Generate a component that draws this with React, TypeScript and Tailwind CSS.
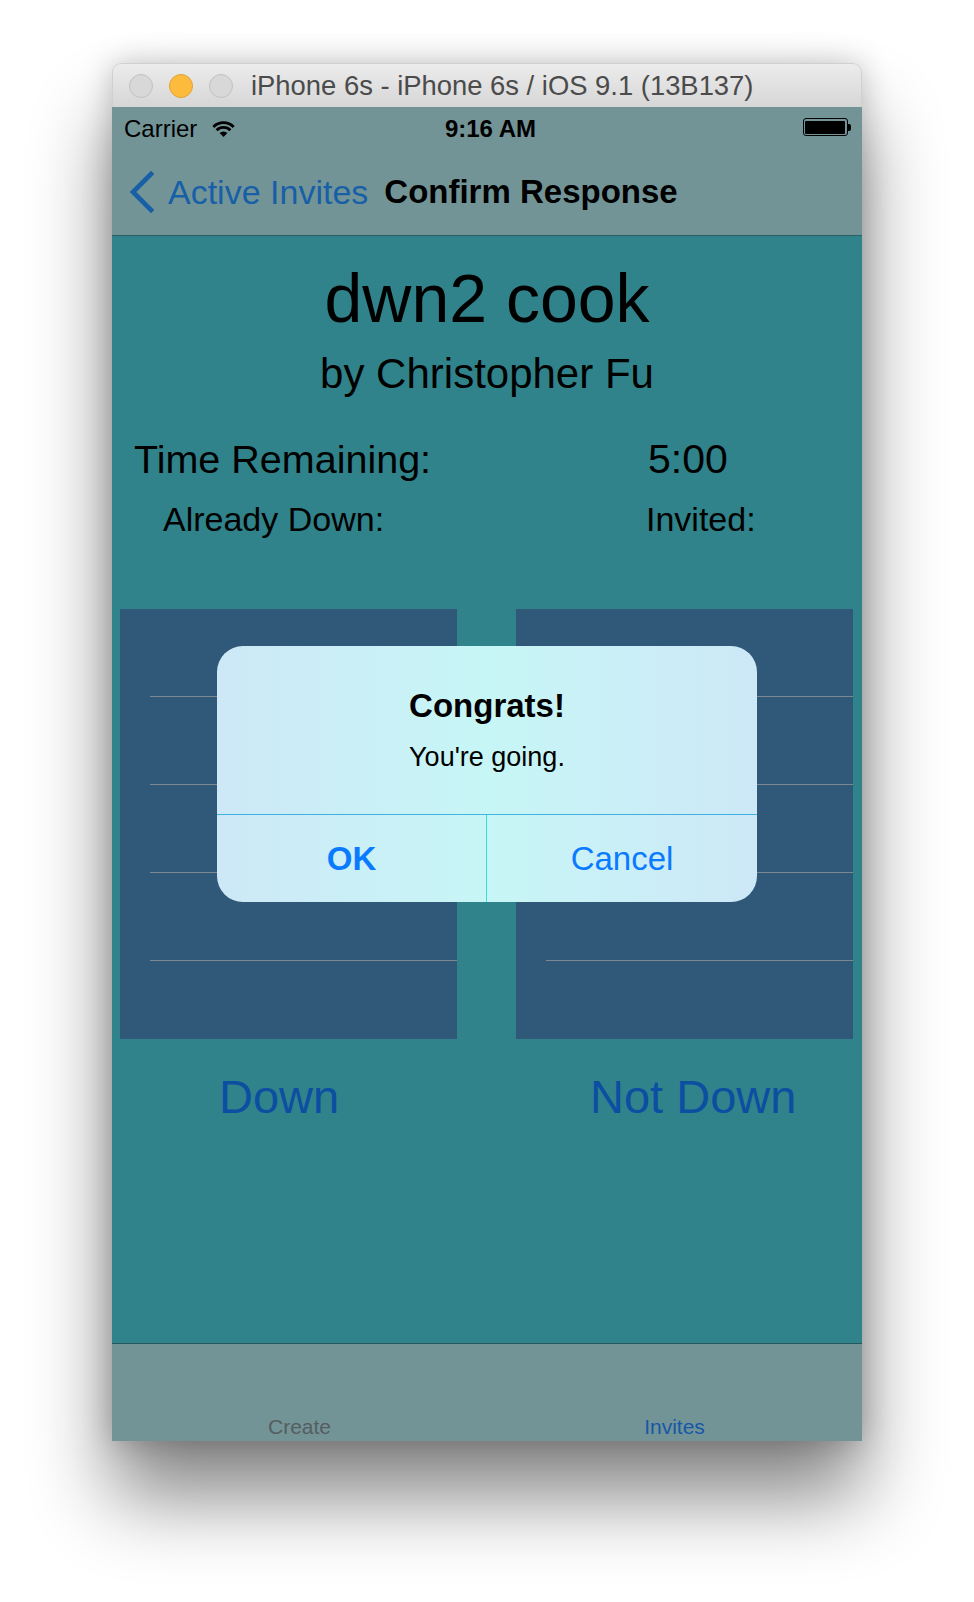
import React from "react";

function Wifi() {
    return (
        <svg width="25" height="17" viewBox="0 0 25 17" className="block">
            <path d="M2.3 6.9 A14.4 14.4 0 0 1 22.7 6.9" fill="none" stroke="#000" strokeWidth="2.8" />
            <path d="M5.6 10.2 A9.8 9.8 0 0 1 19.4 10.2" fill="none" stroke="#000" strokeWidth="2.8" />
            <path d="M12.5 17 L8.6 13.1 A5.5 5.5 0 0 1 16.4 13.1 Z" fill="#000" />
        </svg>
    );
}

function Battery() {
    return (
        <div className="flex items-center">
            <div className="w-[45px] h-[18px] border-[1.5px] border-black rounded-[3px] p-[1.5px]">
                <div className="w-full h-full bg-black rounded-[1px]" />
            </div>
            <div className="w-[3px] h-[7px] bg-black rounded-r-[2px]" />
        </div>
    );
}

function TableBox({ inset }: { inset: string }) {
    return (
        <div className="w-[337px] h-[430px] bg-[#305878]">
            {[0, 1, 2, 3].map((i) => (
                <div key={i} className={`h-[88px] border-b border-[#7d8791] ${inset}`} />
            ))}
        </div>
    );
}

export default function App() {
    return (
        <div className="min-h-[1602px] bg-white pt-[63px] pl-[112px] font-['Liberation_Sans',Arial,sans-serif]">
            <div className="w-[750px] rounded-t-[9px] shadow-[0_56px_80px_rgba(0,0,0,0.48),0_0_30px_rgba(0,0,0,0.22)]">
                {/* simulator title bar */}
                <div className="h-[44px] rounded-t-[9px] bg-gradient-to-b from-[#ececec] to-[#d6d6d6] border-t border-x border-[#d0d0d0] flex items-center pl-[16px]">
                    <div className="flex gap-[16px]">
                        <div className="w-[24px] h-[24px] rounded-full bg-[#d8d8d8] border border-[#c2c2c2]" />
                        <div className="w-[24px] h-[24px] rounded-full bg-[#fdbb3e] border border-[#e0a232]" />
                        <div className="w-[24px] h-[24px] rounded-full bg-[#d8d8d8] border border-[#c2c2c2]" />
                    </div>
                    <span className="ml-[18px] text-[27.4px] text-[#4b4b4b]">iPhone 6s - iPhone 6s / iOS 9.1 (13B137)</span>
                </div>

                {/* screen */}
                <div className="relative h-[1334px] flex flex-col">
                    <div className="bg-[#739497]">
                        <div className="h-[40px] grid grid-cols-3 items-center px-[12px] pr-[11px]">
                            <div className="flex items-center gap-[14px] pt-[3px]">
                                <span className="text-[24px] text-black">Carrier</span>
                                <Wifi />
                            </div>
                            <div className="text-center text-[24px] font-bold text-black pt-[3px] pl-[6px]">9:16 AM</div>
                            <div className="flex justify-end">
                                <Battery />
                            </div>
                        </div>
                        <div className="h-[89px] border-b border-[#2c5e63] flex items-center pl-[17px] pt-[2px]">
                            <svg width="26" height="42" viewBox="0 0 26 42" className="block">
                                <path d="M22 3 L4 21 L22 39" fill="none" stroke="#175fa6" strokeWidth="4.6" strokeLinecap="square" />
                            </svg>
                            <span className="ml-[13px] text-[34px] text-[#175fa6]">Active Invites</span>
                            <span className="ml-[16px] text-[33px] font-bold text-black">Confirm Response</span>
                        </div>
                    </div>

                    <div className="flex-1 bg-[#30838a] flex flex-col text-black">
                        <div className="pt-[22px] text-center text-[68px] leading-[80px]">dwn2 cook</div>
                        <div className="mt-[12px] text-center text-[42px] leading-[48px]">by Christopher Fu</div>
                        <div className="mt-[38px] grid grid-cols-[536px_1fr] text-[39.5px] leading-[46px]">
                            <span className="pl-[22px]">Time Remaining:</span>
                            <span className="text-[41px]">5:00</span>
                        </div>
                        <div className="mt-[17px] grid grid-cols-[534px_1fr] text-[34px] leading-[40px]">
                            <span className="pl-[51px]">Already Down:</span>
                            <span>Invited:</span>
                        </div>
                        <div className="mt-[70px] flex gap-[59px] pl-[8px]">
                            <TableBox inset="ml-[30px]" />
                            <TableBox inset="ml-[30px]" />
                        </div>
                        <div className="mt-[31px] grid grid-cols-[478px_1fr] text-[47px] leading-[54px] text-[#0c4ea2]">
                            <span className="pl-[107px]">Down</span>
                            <span>Not Down</span>
                        </div>
                    </div>

                    <div className="h-[98px] bg-[#739497] border-t border-[#24585c] grid grid-cols-2 items-end pb-[2px] text-[21px] leading-[24px]">
                        <span className="text-center text-[#555d5f]">Create</span>
                        <span className="text-center text-[#1757a7]">Invites</span>
                    </div>

                    {/* alert */}
                    <div className="absolute inset-0 flex items-center justify-center">
                        <div className="w-[540px] h-[256px] rounded-[26px] overflow-hidden bg-gradient-to-r from-[#cde8f7] via-[#c7f6f6] to-[#cde8f7] flex flex-col">
                            <div className="h-[169px] border-b border-[#3fb2e2] pt-[40px] text-center">
                                <div className="text-[33px] leading-[40px] font-bold text-black">Congrats!</div>
                                <div className="mt-[15px] text-[27px] leading-[32px] text-black">You're going.</div>
                            </div>
                            <div className="flex-1 grid grid-cols-2 text-[33px] text-[#0a7aff]">
                                <button className="font-bold border-r border-[#3fd9e2] pt-[1px]">OK</button>
                                <button className="pt-[1px]">Cancel</button>
                            </div>
                        </div>
                    </div>
                </div>
            </div>
        </div>
    );
}
